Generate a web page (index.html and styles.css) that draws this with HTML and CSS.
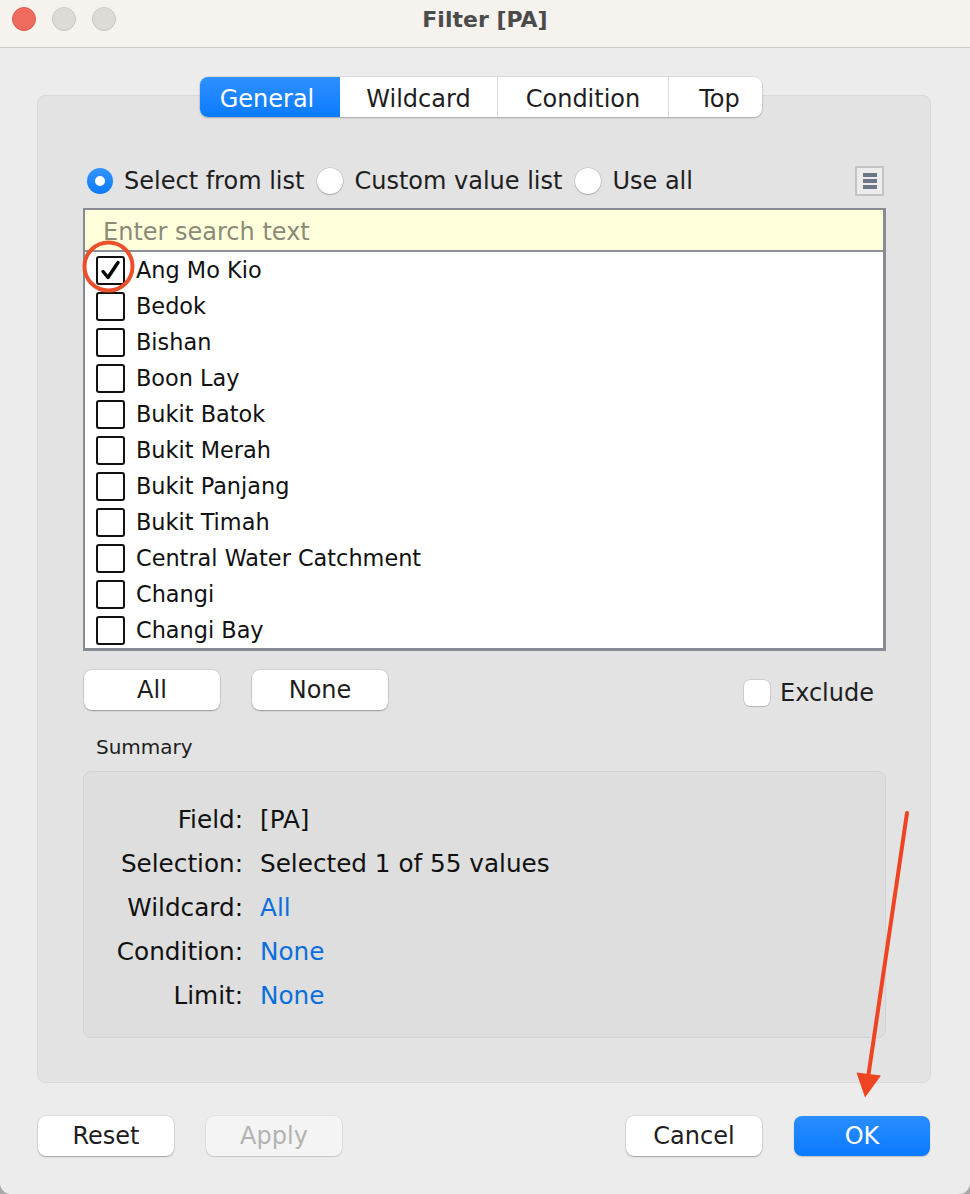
FILE: index.html
```html
<!DOCTYPE html>
<html>
<head>
<meta charset="utf-8">
<title>Filter [PA]</title>
<link rel="stylesheet" href="styles.css">
</head>
<body>
<div class="window">
  <div class="titlebar">
    <div class="lights">
      <span class="light red"></span>
      <span class="light"></span>
      <span class="light"></span>
    </div>
    <div class="title">Filter [PA]</div>
  </div>

  <div class="content">
    <div class="tabs-row">
      <div class="tabs">
        <div class="tab tab-general active">General</div>
        <div class="tab tab-wildcard">Wildcard</div>
        <div class="tab tab-condition">Condition</div>
        <div class="tab tab-top">Top</div>
      </div>
    </div>

    <div class="panel">
      <div class="radio-row">
        <label class="radio"><span class="radio-dot checked"></span>Select from list</label>
        <label class="radio"><span class="radio-dot"></span>Custom value list</label>
        <label class="radio"><span class="radio-dot"></span>Use all</label>
        <div class="menu-btn"><span></span><span></span><span></span></div>
      </div>

      <div class="listbox">
        <div class="search">Enter search text</div>
        <ul class="items">
          <li class="item"><span class="cb checked"><svg width="29" height="29" viewBox="0 0 29 29"><path d="M7 15.5 L12 21.5 L22 6.5" fill="none" stroke="#000" stroke-width="3.4" stroke-linecap="round" stroke-linejoin="round"/></svg></span>Ang Mo Kio</li>
          <li class="item"><span class="cb"></span>Bedok</li>
          <li class="item"><span class="cb"></span>Bishan</li>
          <li class="item"><span class="cb"></span>Boon Lay</li>
          <li class="item"><span class="cb"></span>Bukit Batok</li>
          <li class="item"><span class="cb"></span>Bukit Merah</li>
          <li class="item"><span class="cb"></span>Bukit Panjang</li>
          <li class="item"><span class="cb"></span>Bukit Timah</li>
          <li class="item"><span class="cb"></span>Central Water Catchment</li>
          <li class="item"><span class="cb"></span>Changi</li>
          <li class="item"><span class="cb"></span>Changi Bay</li>
        </ul>
      </div>

      <div class="list-actions">
        <div class="btn">All</div>
        <div class="btn">None</div>
        <label class="exclude"><span class="cb-round"></span>Exclude</label>
      </div>

      <div class="summary-label">Summary</div>
      <div class="summary">
        <div class="s-label">Field:</div><div class="s-value">[PA]</div>
        <div class="s-label">Selection:</div><div class="s-value">Selected 1 of 55 values</div>
        <div class="s-label">Wildcard:</div><div class="s-value link">All</div>
        <div class="s-label">Condition:</div><div class="s-value link">None</div>
        <div class="s-label">Limit:</div><div class="s-value link">None</div>
      </div>
    </div>

    <div class="footer">
      <div class="btn">Reset</div>
      <div class="btn disabled">Apply</div>
      <div class="btn push">Cancel</div>
      <div class="btn primary">OK</div>
    </div>
  </div>

  <svg class="annot" width="970" height="1194" viewBox="0 0 970 1194">
    <circle cx="108.5" cy="266.5" r="24" fill="none" stroke="#e9502b" stroke-width="4"/>
    <line x1="907" y1="813" x2="868" y2="1078" stroke="#ee4421" stroke-width="4" stroke-linecap="round"/>
    <polygon points="856.5,1072.5 881,1075.5 865,1097.5" fill="#ee4421"/>
  </svg>
</div>
</body>
</html>
```

FILE: styles.css
```css
* { box-sizing: border-box; }

html, body {
  margin: 0;
  padding: 0;
}

body {
  background: #a9a9a9;
  font-family: "DejaVu Sans", "Verdana", sans-serif;
  color: #1e1e1e;
}

.window {
  position: relative;
  width: 970px;
  height: 1194px;
  background: #ececec;
  border-radius: 0 0 11px 11px;
  overflow: hidden;
}

/* Title bar */
.titlebar {
  display: grid;
  grid-template-columns: 1fr;
  align-items: center;
  height: 48px;
  background: #f6f2ee;
  border-bottom: 1px solid #cdcbc9;
}

.lights,
.title {
  grid-area: 1 / 1;
}

.lights {
  display: flex;
  gap: 16px;
  padding-left: 12px;
  margin-top: -9px;
}

.light {
  width: 24px;
  height: 24px;
  border-radius: 50%;
  background: #dedad6;
  border: 1px solid #cbc7c3;
}

.light.red {
  background: #ee6b5e;
  border-color: #d75b4f;
}

.title {
  justify-self: center;
  font-size: 22px;
  font-weight: bold;
  color: #4b4b4b;
  margin-top: -8px;
}

/* Content */
.content {
  padding-top: 29px;
}

.tabs-row {
  display: flex;
  justify-content: center;
  padding-right: 8px;
  position: relative;
  z-index: 1;
}

.tabs {
  display: flex;
  height: 40px;
  background: #fff;
  border-radius: 8px;
  box-shadow: 0 0 0 0.5px rgba(0,0,0,0.12), 0 1px 2px rgba(0,0,0,0.22);
  overflow: hidden;
}

.tab {
  display: flex;
  align-items: center;
  justify-content: center;
  padding-top: 3px;
  font-size: 24px;
  color: #1e1e1e;
  border-left: 1px solid #dcdcdc;
}

.tab.active {
  background: linear-gradient(#2f90ff, #0a7bff);
  color: #fff;
  border-left: none;
}

.tab-general { width: 140px; padding-right: 6px; }
.tab-wildcard { width: 157px; border-left: none; }
.tab-condition { width: 171px; }
.tab-top { width: 94px; padding-left: 8px; }

/* Panel */
.panel {
  margin: -22px 39px 0 37px;
  background: #e3e3e3;
  border: 1px solid #d9d9d9;
  border-radius: 8px;
  padding: 67px 44px 44px 45px;
}

.radio-row {
  display: flex;
  align-items: center;
  height: 36px;
  margin-bottom: 9px;
  padding-left: 4px;
}

.radio {
  display: flex;
  align-items: center;
  gap: 11px;
  font-size: 24px;
  color: #1e1e1e;
  margin-right: 13px;
}

.radio-dot {
  width: 26px;
  height: 26px;
  border-radius: 50%;
  background: #fff;
  box-shadow: 0 0 0 0.5px rgba(0,0,0,0.18), 0 1px 1.5px rgba(0,0,0,0.2);
  display: flex;
  align-items: center;
  justify-content: center;
}

.radio-dot.checked {
  background: linear-gradient(#3593ff, #0a7bff);
  box-shadow: none;
}

.radio-dot.checked::after {
  content: "";
  width: 10px;
  height: 10px;
  border-radius: 50%;
  background: #fff;
}

.menu-btn {
  margin-left: auto;
  margin-right: 2px;
  width: 29px;
  height: 30px;
  border: 2px solid #c3c3c3;
  background: #ececec;
  display: flex;
  flex-direction: column;
  align-items: center;
  justify-content: center;
  gap: 2px;
}

.menu-btn span {
  width: 14px;
  height: 4px;
  background: #6b7787;
}

/* List box */
.listbox {
  border: 2px solid #878b93;
  border-bottom-width: 3px;
  border-right-width: 3px;
  background: #fff;
}

.search {
  height: 42px;
  background: #ffffdc;
  border-bottom: 2px solid #8c9097;
  padding-left: 18px;
  padding-top: 2px;
  font-size: 24px;
  line-height: 40px;
  color: #8a8a77;
}

.items {
  list-style: none;
  margin: 0;
  padding: 0;
}

.item {
  display: flex;
  align-items: center;
  gap: 11px;
  height: 36px;
  padding-left: 11px;
  font-size: 22.4px;
  color: #111;
}

.cb {
  width: 29px;
  height: 29px;
  border: 2px solid #111;
  border-radius: 3px;
  background: #fff;
  position: relative;
  flex: none;
}

.cb svg {
  position: absolute;
  left: -2px;
  top: -2px;
}

/* List actions */
.list-actions {
  display: flex;
  align-items: center;
  gap: 32px;
  margin-top: 19px;
  padding-left: 1px;
}

.btn {
  width: 136px;
  height: 40px;
  background: #fff;
  border-radius: 8px;
  box-shadow: 0 0 0 0.5px rgba(0,0,0,0.12), 0 1px 1.5px rgba(0,0,0,0.28);
  display: flex;
  align-items: center;
  justify-content: center;
  font-size: 24px;
  color: #1e1e1e;
}

.exclude {
  margin-left: auto;
  margin-right: 12px;
  margin-top: 6px;
  display: flex;
  align-items: center;
  gap: 10px;
  font-size: 24px;
  color: #1e1e1e;
}

.cb-round {
  width: 26px;
  height: 26px;
  border-radius: 6px;
  background: #fff;
  box-shadow: 0 0 0 0.5px rgba(0,0,0,0.18), 0 1px 1px rgba(0,0,0,0.12);
}

/* Summary */
.summary-label {
  margin-top: 25px;
  padding-left: 13px;
  font-size: 20px;
  line-height: 24px;
  color: #1e1e1e;
}

.summary {
  margin-top: 12px;
  background: #dedede;
  border: 1px solid #d3d3d3;
  border-radius: 8px;
  padding: 25px 0 20px 0;
  display: grid;
  grid-template-columns: 159px 1fr;
  column-gap: 17px;
  grid-auto-rows: 44px;
  align-items: center;
  font-size: 24.7px;
}

.s-label {
  text-align: right;
  color: #111;
}

.s-value {
  color: #111;
}

.s-value.link {
  color: #0a6fdd;
}

/* Footer */
.footer {
  display: flex;
  gap: 32px;
  padding: 33px 40px 0 38px;
}

.btn.disabled {
  background: #f4f4f4;
  color: #b2b2b2;
  box-shadow: 0 0 0 0.5px rgba(0,0,0,0.08), 0 1px 1.5px rgba(0,0,0,0.14);
}

.btn.push {
  margin-left: auto;
}

.btn.primary {
  background: linear-gradient(#2a8dff, #0a7aff);
  color: #fff;
  box-shadow: 0 1px 1.5px rgba(0,0,0,0.2);
}

/* Annotations overlay */
.annot {
  position: absolute;
  left: 0;
  top: 0;
  pointer-events: none;
}
```
